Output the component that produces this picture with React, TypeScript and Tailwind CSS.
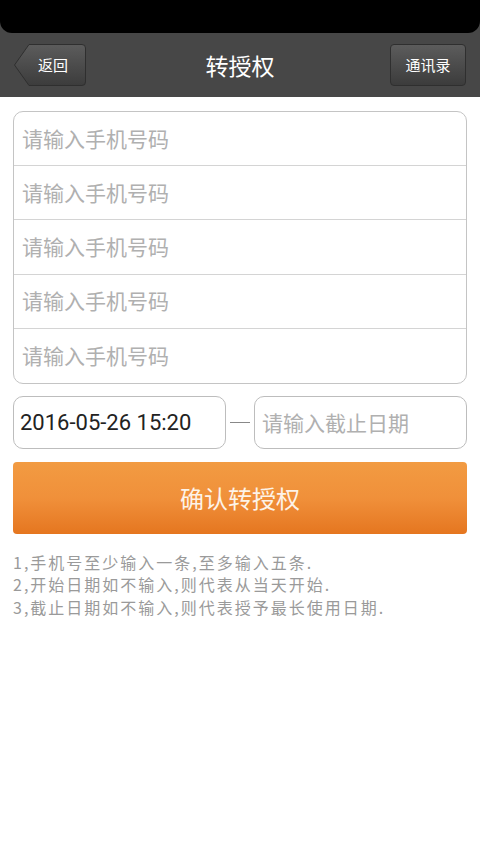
const font = { fontFamily: '"Noto Sans CJK SC", Roboto, sans-serif' };

function PhoneRow({ last }: { last?: boolean }) {
  return (
    <div
      className={`flex h-[54.2px] items-center px-[8px] text-[21px] text-[#b0b0b0] ${
        last ? '' : 'border-b border-[#d4d4d4]'
      }`}
    >
      请输入手机号码
    </div>
  );
}

export default function App() {
  return (
    <div className="h-[853px] w-[480px] overflow-hidden bg-white" style={font}>
      <div className="relative z-10 h-[33px] rounded-b-[12px] bg-black" />
      <div className="-mt-[12px] flex h-[76px] items-end bg-[#474747] px-[14px] pb-[11px]">
        <div className="relative flex w-full items-center justify-between">
          <button
            type="button"
            className="relative flex h-[42px] w-[72px] items-center justify-center pl-[6px] text-[15px] text-white"
          >
            <svg className="absolute inset-0" width="72" height="42" viewBox="0 0 72 42">
              <defs>
                <linearGradient id="bk" x1="0" y1="0" x2="0" y2="1">
                  <stop offset="0" stopColor="#5c5c5c" />
                  <stop offset="1" stopColor="#3c3c3c" />
                </linearGradient>
              </defs>
              <path
                d="M15 0.5 H68 Q71.5 0.5 71.5 4 V38 Q71.5 41.5 68 41.5 H15 L0.5 21 Z"
                fill="url(#bk)"
                stroke="#2f2f2f"
              />
            </svg>
            <span className="relative">返回</span>
          </button>
          <div className="absolute left-1/2 -translate-x-1/2 text-[23px] text-white">转授权</div>
          <button
            type="button"
            className="flex h-[42px] w-[76px] items-center justify-center rounded-[4px] border border-[#2f2f2f] bg-gradient-to-b from-[#5c5c5c] to-[#3c3c3c] text-[15px] text-white"
          >
            通讯录
          </button>
        </div>
      </div>

      <div className="px-[13px] pt-[14px]">
        <div className="overflow-hidden rounded-[10px] border border-[#c4c4c4]">
          <PhoneRow />
          <PhoneRow />
          <PhoneRow />
          <PhoneRow />
          <PhoneRow last />
        </div>

        <div className="mt-[12px] flex items-center">
          <div
            className="flex h-[53px] w-[213px] items-center rounded-[10px] border border-[#bdbdbd] px-[6px] text-[22px] text-[#222]"
            style={{ fontFamily: 'Roboto, sans-serif' }}
          >
            2016-05-26 15:20
          </div>
          <div className="mx-[4px] h-px w-[20px] bg-[#888]" />
          <div className="flex h-[53px] flex-1 items-center rounded-[10px] border border-[#bdbdbd] px-[7px] text-[21px] text-[#b0b0b0]">
            请输入截止日期
          </div>
        </div>

        <button
          type="button"
          className="mt-[13px] flex h-[72px] w-full items-center justify-center rounded-[4px] bg-gradient-to-b from-[#f29b42] via-[#f0903a] to-[#e5761f] text-[24px] text-[#fdf3e8]"
        >
          确认转授权
        </button>

        <div className="mt-[17px] text-[16px] leading-[22.5px] tracking-[2px] text-[#9a9a9a]">
          <div>1,手机号至少输入一条,至多输入五条.</div>
          <div>2,开始日期如不输入,则代表从当天开始.</div>
          <div>3,截止日期如不输入,则代表授予最长使用日期.</div>
        </div>
      </div>
    </div>
  );
}
